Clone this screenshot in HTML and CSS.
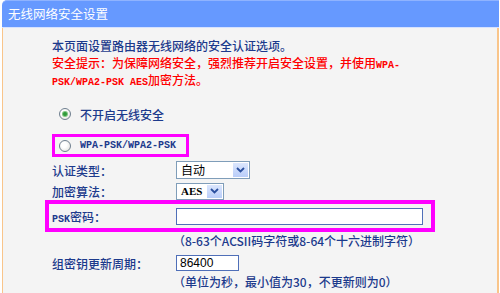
FILE: index.html
```html
<!DOCTYPE html>
<html lang="zh-CN">
<head>
<meta charset="utf-8">
<title>无线网络安全设置</title>
<link rel="stylesheet" href="styles.css">
</head>
<body>
<div class="panel">
  <div class="title">无线网络安全设置</div>
  <div class="content">
    <p class="intro">本页面设置路由器无线网络的安全认证选项。</p>
    <p class="warn">安全提示：为保障网络安全，强烈推荐开启安全设置，并使用<span class="mono">WPA-</span><br><span class="mono">PSK/WPA2-PSK AES</span>加密方法。</p>

    <div class="option first"><span class="radio checked"></span><span>不开启无线安全</span></div>
    <div class="option boxed"><span class="radio"></span><span class="mono">WPA-PSK/WPA2-PSK</span></div>

    <div class="row auth">
      <span class="label">认证类型：</span>
      <div class="select wide"><span class="val">自动</span><span class="btn"><svg width="9" height="6" viewBox="0 0 9 6"><path d="M1 1 L4.5 4.5 L8 1" fill="none" stroke="#2a4f9e" stroke-width="1.8"/></svg></span></div>
    </div>
    <div class="row enc">
      <span class="label">加密算法：</span>
      <div class="select narrow"><span class="val aes">AES</span><span class="btn"><svg width="9" height="6" viewBox="0 0 9 6"><path d="M1 1 L4.5 4.5 L8 1" fill="none" stroke="#2a4f9e" stroke-width="1.8"/></svg></span></div>
    </div>

    <div class="row boxed2">
      <span class="label"><span class="mono">PSK</span>密码：</span>
      <div class="input psk"></div>
    </div>
    <p class="hint">（8-63个ACSII码字符或8-64个十六进制字符）</p>

    <div class="row key">
      <span class="label">组密钥更新周期：</span>
      <div class="input period">86400</div>
    </div>
    <p class="hint">（单位为秒，最小值为30，不更新则为0）</p>
  </div>
</div>
</body>
</html>
```
FILE: styles.css
```css
html, body {
  margin: 0;
  padding: 0;
  background: #ffffff;
}
body {
  font-family: "Noto Sans CJK SC", "Liberation Sans", sans-serif;
  font-size: 12px;
  font-weight: 500;
  color: #1c3a8c;
  overflow: hidden;
}
.panel {
  margin-left: 2px;
  width: 497px;
}
.title {
  height: 28px;
  line-height: 26px;
  background: #6699ff;
  border-top: 1px solid #8fb3ff;
  border-bottom: 1px solid #d6e2ff;
  border-top-left-radius: 5px;
  color: #ffffff;
  font-weight: 400;
  font-size: 12.5px;
  padding-left: 6px;
  box-sizing: border-box;
}
.content {
  background: #f4f4f4;
  border-left: 1px solid #f9c58a;
  border-right: 2px solid #f9c58a;
  padding: 9px 0 0 49px;
  height: 265px;
  box-sizing: border-box;
}
p {
  margin: 0;
}
.intro, .warn {
  line-height: 17px;
  height: auto;
}
.warn {
  color: #ff0000;
}
.mono {
  font-family: "Liberation Mono", monospace;
  font-size: 10px;
  line-height: 1;
  font-weight: 700;
}
.option {
  display: flex;
  align-items: center;
  gap: 9px;
  height: 20px;
  padding-left: 7px;
}
.option.first {
  margin-top: 16px;
}
.option.boxed {
  margin-top: 10px;
  width: 137px;
  height: 23px;
  box-sizing: border-box;
  border: 3px solid #ff00ff;
  padding-left: 4px;
}
.radio {
  width: 12px;
  height: 12px;
  border-radius: 50%;
  box-sizing: border-box;
  border: 1px solid #6f7f8f;
  background: radial-gradient(circle at 40% 40%, #ffffff 30%, #dcdcd6 100%);
  display: flex;
  align-items: center;
  justify-content: center;
}
.radio.checked::after {
  content: "";
  width: 4px;
  height: 4px;
  border-radius: 50%;
  background: #2f9a3a;
  box-shadow: 0 0 0 1px #7dc47f;
}
.row {
  display: flex;
  align-items: center;
}
.label {
  width: 124px;
  flex: none;
  line-height: 17px;
}
.row.auth {
  margin-top: 3px;
  height: 20px;
}
.row.enc {
  margin-top: 2px;
  height: 18px;
}
.row.boxed2 {
  margin-left: -7px;
  width: 390px;
  height: 32px;
  box-sizing: border-box;
  border: 4px solid #ff00ff;
  padding-left: 3px;
}
.row.key {
  margin-top: 4px;
  height: 20px;
}
.select {
  display: flex;
  align-items: stretch;
  background: #ffffff;
  border: 1px solid #7f9db9;
  box-sizing: border-box;
}
.select.wide {
  width: 74px;
  height: 18px;
}
.select.narrow {
  width: 48px;
  height: 17px;
}
.select .val {
  flex: 1;
  padding-left: 4px;
  line-height: 16px;
  color: #000000;
  font-weight: 400;
}
.select .val.aes {
  line-height: 15px;
  font-weight: 700;
  font-family: "Liberation Serif", serif;
  font-size: 11px;
}
.select .btn {
  width: 15px;
  margin: 1px;
  background: linear-gradient(#dbe6fd, #b9cdf9);
  display: flex;
  align-items: center;
  justify-content: center;
}
.input {
  background: #ffffff;
  border: 1px solid #4f6fb8;
  box-sizing: border-box;
  color: #000000;
}
.input.psk {
  width: 247px;
  height: 17px;
}
.input.period {
  width: 63px;
  height: 16px;
  line-height: 14px;
  padding-left: 3px;
  font-family: "Liberation Sans", sans-serif;
  font-weight: 400;
  font-size: 12px;
}
.hint {
  padding-left: 121px;
  line-height: 17px;
}
```
